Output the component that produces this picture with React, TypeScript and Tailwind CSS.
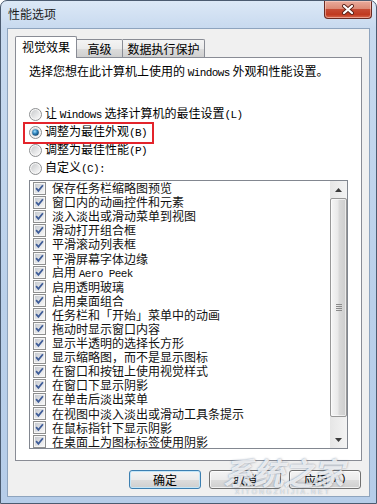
import React from "react";

const items: React.ReactNode[] = [
  "保存任务栏缩略图预览",
  "窗口内的动画控件和元素",
  "淡入淡出或滑动菜单到视图",
  "滑动打开组合框",
  "平滑滚动列表框",
  "平滑屏幕字体边缘",
  <>
    启用 <Latin>Aero Peek</Latin>
  </>,
  "启用透明玻璃",
  "启用桌面组合",
  "任务栏和「开始」菜单中的动画",
  "拖动时显示窗口内容",
  "显示半透明的选择长方形",
  "显示缩略图，而不是显示图标",
  "在窗口和按钮上使用视觉样式",
  "在窗口下显示阴影",
  "在单击后淡出菜单",
  "在视图中淡入淡出或滑动工具条提示",
  "在鼠标指针下显示阴影",
  "在桌面上为图标标签使用阴影",
];

function Latin({ children }: { children: React.ReactNode }) {
  return (
    <span className="font-['Liberation_Mono',monospace] text-[11px] tracking-[-0.6px]">{children}</span>
  );
}

function Radio({ checked }: { checked?: boolean }) {
  return (
    <svg width="13" height="13" viewBox="0 0 13 13" className="shrink-0">
      <defs>
        <linearGradient id="rbg" x1="0" y1="0" x2="1" y2="1">
          <stop offset="0" stopColor="#c9cbcd" />
          <stop offset="1" stopColor="#fafafa" />
        </linearGradient>
        <radialGradient id="rdot" cx="0.4" cy="0.35" r="0.75">
          <stop offset="0" stopColor="#a8e2ff" />
          <stop offset="0.45" stopColor="#2f84bd" />
          <stop offset="1" stopColor="#0c3558" />
        </radialGradient>
      </defs>
      <circle cx="6.5" cy="6.5" r="6" fill="#f5f5f5" stroke="#8d8f91" />
      <circle cx="6.5" cy="6.5" r="4.4" fill="url(#rbg)" />
      {checked && <circle cx="6.5" cy="6.5" r="3.3" fill="url(#rdot)" />}
    </svg>
  );
}

function Check() {
  return (
    <svg width="13" height="13" viewBox="0 0 13 13" className="shrink-0">
      <defs>
        <linearGradient id="cbg" x1="0" y1="0" x2="1" y2="1">
          <stop offset="0" stopColor="#c6cad0" />
          <stop offset="1" stopColor="#f7f7f7" />
        </linearGradient>
      </defs>
      <rect x="0.5" y="0.5" width="12" height="12" fill="#f6f6f6" stroke="#8e8f8f" />
      <rect x="2" y="2" width="9" height="9" fill="url(#cbg)" />
      <path d="M3.1 6.2 L5.4 8.8 L9.9 3.3" fill="none" stroke="#3f5d98" strokeWidth="1.8" />
    </svg>
  );
}

function CloseButton() {
  return (
    <div className="w-[48px] h-[18px] -mr-[2px] rounded-b-[4px] border border-t-0 border-[#6a2a22] bg-[linear-gradient(to_bottom,#e9ab9c_0%,#dc8a76_45%,#c64a33_50%,#c0391f_80%,#d9694f_100%)] shadow-[inset_0_0_0_1px_rgba(255,220,210,0.5)] flex items-center justify-center">
      <svg width="14" height="11" viewBox="0 0 14 11">
        <path d="M3 2 L11 9 M11 2 L3 9" stroke="#5b2219" strokeWidth="4" strokeLinecap="round" />
        <path d="M3 2 L11 9 M11 2 L3 9" stroke="#ffffff" strokeWidth="2.2" strokeLinecap="round" />
      </svg>
    </div>
  );
}

function Btn({ children, def }: { children: React.ReactNode; def?: boolean }) {
  return (
    <div
      className={
        "w-[72px] h-[19px] rounded-[3px] border flex items-center justify-center text-[12px] leading-none text-black bg-[linear-gradient(to_bottom,#f4f4f4_0%,#ebebeb_50%,#dddddd_50%,#cfcfcf_100%)] " +
        (def
          ? "border-[#3c7fb1] shadow-[inset_0_0_0_1px_#c4e6f8]"
          : "border-[#707070] shadow-[inset_0_0_0_1px_rgba(255,255,255,0.7)]")
      }
    >
      {children}
    </div>
  );
}

export default function App() {
  return (
    <div className="w-[377px] h-[504px] relative overflow-hidden rounded-t-[7px] border border-[#4b5b70] bg-[linear-gradient(to_bottom,#dce8f6_0px,#c8daef_27px,#bad0ea_60%,#b6cde9_100%)] px-[6px] pb-[6px] flex flex-col font-['Noto_Sans_CJK_SC',sans-serif] text-[12px] text-black">
      {/* title bar */}
      <div className="h-[27px] flex items-start justify-between">
        <div className="pt-[6px] pl-[1px] text-[12px] leading-[14px] text-[#1c1c1c]">性能选项</div>
        <CloseButton />
      </div>

      {/* client area */}
      <div className="h-[469px] border border-[#8ea4be] bg-[#f0f0f0] flex flex-col px-[7px] pt-[7px]">
        {/* tabs */}
        <div className="flex items-end h-[21px] relative z-10">
          <div className="w-[62px] h-[22px] -mb-[1px] bg-white border border-b-0 border-[#898c95] rounded-t-[2px] flex items-center justify-center leading-[14px] pb-[2px]">
            视觉效果
          </div>
          <div className="w-[46px] h-[18px] border border-l-0 border-b-0 border-[#898c95] rounded-tr-[2px] bg-[linear-gradient(to_bottom,#f4f4f4_0%,#ebebeb_50%,#dddddd_50%,#cfcfcf_100%)] flex items-center justify-center leading-[14px]">
            高级
          </div>
          <div className="w-[82px] h-[18px] border border-l-0 border-b-0 border-[#898c95] rounded-tr-[2px] bg-[linear-gradient(to_bottom,#f4f4f4_0%,#ebebeb_50%,#dddddd_50%,#cfcfcf_100%)] flex items-center justify-center leading-[14px]">
            数据执行保护
          </div>
        </div>

        {/* panel */}
        <div className="w-[347px] h-[404px] bg-white border border-[#898c95] px-[13px] pt-[6px] flex flex-col">
          <div className="leading-[14px] whitespace-nowrap">
            选择您想在此计算机上使用的 <Latin>Windows</Latin> 外观和性能设置。
          </div>

          <div className="mt-[25px] flex flex-col">
            <div className="h-[18px] flex items-center gap-[3px] whitespace-nowrap">
              <Radio />
              <span className="leading-[14px]">
                让 <Latin>Windows</Latin> 选择计算机的最佳设置<Latin>(L)</Latin>
              </span>
            </div>
            <div className="h-[18px] flex items-center gap-[3px] whitespace-nowrap relative">
              <Radio checked />
              <span className="leading-[14px]">
                调整为最佳外观<Latin>(B)</Latin>
              </span>
              <div className="absolute left-[-6px] top-[-1px] w-[131px] h-[22px] border-2 border-[#e3242b]" />
            </div>
            <div className="h-[18px] flex items-center gap-[3px] whitespace-nowrap">
              <Radio />
              <span className="leading-[14px]">
                调整为最佳性能<Latin>(P)</Latin>
              </span>
            </div>
            <div className="h-[18px] flex items-center gap-[3px] whitespace-nowrap">
              <Radio />
              <span className="leading-[14px]">
                自定义<Latin>(C):</Latin>
              </span>
            </div>
          </div>

          {/* list box */}
          <div className="mt-[3px] w-[319px] h-[269px] border border-[#828790] flex">
            <div className="flex-1 flex flex-col pl-[3px]">
              {items.map((t, i) => (
                <div key={i} className="h-[14.1px] shrink-0 flex items-center gap-[6px] whitespace-nowrap">
                  <Check />
                  <span className="leading-[14px] text-[#111]">{t}</span>
                </div>
              ))}
            </div>
            {/* scrollbar */}
            <div className="w-[17px] flex flex-col bg-[linear-gradient(to_right,#e6e6e6,#f3f3f3)]">
              <div className="h-[17px] flex items-center justify-center">
                <svg width="7" height="4" viewBox="0 0 7 4">
                  <path d="M0 4 L3.5 0 L7 4 Z" fill="#3b3b3b" />
                </svg>
              </div>
              <div className="h-[219px] rounded-[2px] border border-[#989898] bg-[linear-gradient(to_right,#f6f6f6_0%,#e9e9e9_45%,#d9d9d9_55%,#cdcdcd_100%)] shadow-[inset_0_0_0_1px_rgba(255,255,255,0.6)] flex items-center justify-center">
                <div className="flex flex-col gap-[1px]">
                  <div className="w-[6px] h-[1px] bg-[#8a8a8a]" />
                  <div className="w-[6px] h-[1px] bg-[#8a8a8a]" />
                  <div className="w-[6px] h-[1px] bg-[#8a8a8a]" />
                  <div className="w-[6px] h-[1px] bg-[#8a8a8a]" />
                </div>
              </div>
              <div className="flex-1" />
              <div className="h-[17px] flex items-center justify-center">
                <svg width="7" height="4" viewBox="0 0 7 4">
                  <path d="M0 0 L3.5 4 L7 0 Z" fill="#3b3b3b" />
                </svg>
              </div>
            </div>
          </div>
        </div>

        {/* buttons */}
        <div className="mt-[9px] flex justify-end gap-[8px] pr-[1px]">
          <Btn def>确定</Btn>
          <Btn>取消</Btn>
          <Btn>
            应用<Latin>(A)</Latin>
          </Btn>
        </div>
      </div>

      {/* watermark */}
      <div className="absolute left-[222px] top-[455px] pointer-events-none select-none flex flex-col items-center">
        <div className="text-[31px] font-bold italic leading-none text-white/80 tracking-[-1px] [text-shadow:0_0_2px_rgba(70,90,120,0.7)]">
          系统之家
        </div>
        <div className="mt-[1px] text-[7px] leading-none tracking-[2px] text-white/80 font-['Liberation_Sans',sans-serif] [text-shadow:0_0_1px_rgba(70,90,120,0.7)]">
          XITONGZHIJIA.NET
        </div>
      </div>
    </div>
  );
}
